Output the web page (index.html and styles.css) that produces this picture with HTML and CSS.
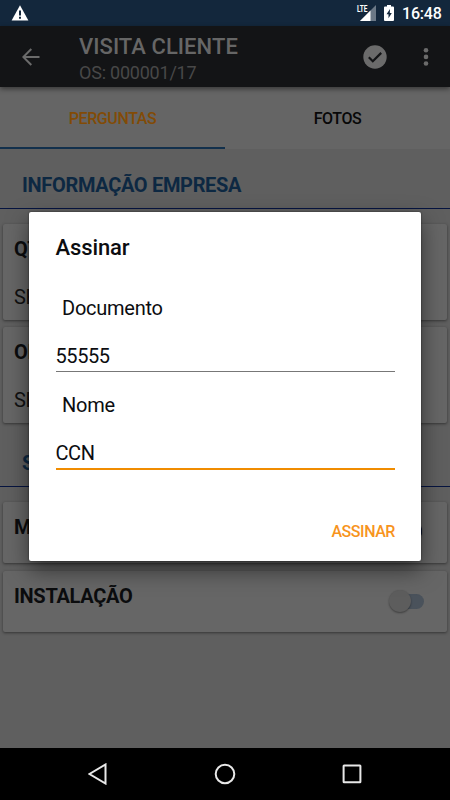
FILE: index.html
```html
<!DOCTYPE html>
<html lang="pt-BR">
<head>
<meta charset="utf-8">
<meta name="viewport" content="width=device-width, initial-scale=1">
<title>Visita Cliente</title>
<link rel="stylesheet" href="styles.css">
</head>
<body>
<div class="screen">
  <div class="status">
    <svg class="warn" width="18" height="16" viewBox="0 0 18 16"><path d="M9 .3 17.4 15.500H.6Z" fill="#fff"/><path d="M8 5.500h2v5H8zM8 11.700h2v2H8z" fill="#13273c"/></svg>
    <div class="status-right">
      <svg width="22" height="18" viewBox="0 0 22 18"><path d="M20 1v16H4Z" fill="#6b7886"/><path d="M14.500 6.500V17H4Z" fill="#fff"/><path d="M0 0h12v9H0z" fill="#13273c"/><text class="lte" x="1" y="8" textLength="10.500" lengthAdjust="spacingAndGlyphs">LTE</text></svg>
      <svg class="battery" width="10" height="16" viewBox="0 0 10 16"><path d="M3 0h4v1.600h2q1 0 1 1V15q0 1-1 1H1q-1 0-1-1V2.600q0-1 1-1h2z" fill="#fff"/><path d="M6 4 2.500 9.300h2v4L7.800 8h-2z" fill="#13273c"/></svg>
      <span class="clock">16:48</span>
    </div>
  </div>
  <header class="appbar">
    <svg class="back" width="18" height="18" viewBox="0 0 18 18" fill="none" stroke="#6b6b6b" stroke-width="2"><path d="M17.500 9H2M9.300 1 1.300 9l8 8"/></svg>
    <div class="titles">
      <h1 class="title">VISITA CLIENTE</h1>
      <div class="subtitle">OS: 000001/17</div>
    </div>
    <svg class="done" width="24" height="24" viewBox="0 0 24 24"><circle cx="12" cy="12" r="11.700" fill="#6b6b6b"/><path d="m5.800 12.300 4 4 8.400-8.400" fill="none" stroke="#131416" stroke-width="2.200"/></svg>
    <svg class="more" width="6" height="20" viewBox="0 0 6 20" fill="#6b6b6b"><circle cx="3" cy="3.300" r="2.300"/><circle cx="3" cy="9.900" r="2.300"/><circle cx="3" cy="16.500" r="2.300"/></svg>
  </header>
  <nav class="tabs">
    <div class="tab active">PERGUNTAS</div>
    <div class="tab">FOTOS</div>
  </nav>
  <main class="content">
    <h2 class="section">INFORMAÇÃO EMPRESA</h2>
    <div class="cards">
      <div class="card tall"><b>QT</b><span>SE</span></div>
      <div class="card tall"><b>OB</b><span>SE</span></div>
    </div>
    <h2 class="section second">S</h2>
    <div class="cards last">
      <div class="card"><b>M</b><i class="switch on"></i></div>
      <div class="card"><b>INSTALAÇÃO</b><i class="switch"></i></div>
    </div>
  </main>
  <footer class="navbar">
    <svg width="20" height="22" viewBox="0 0 20 22"><path d="M17.500 1.500v19L1.500 11Z"/></svg>
    <svg width="22" height="22" viewBox="0 0 22 22"><circle cx="11" cy="11" r="9.300"/></svg>
    <svg width="20" height="22" viewBox="0 0 20 22"><rect x="1.600" y="2.500" width="16.800" height="16.800" rx=".5"/></svg>
  </footer>
  <section class="dialog">
    <h3 class="dialog-title">Assinar</h3>
    <div class="label">Documento</div>
    <div class="field">55555</div>
    <div class="label">Nome</div>
    <div class="field focus">CCN</div>
    <div class="action">ASSINAR</div>
  </section>
</div>
</body>
</html>
```

FILE: styles.css
```css
* { box-sizing: border-box; }
body { margin: 0; font-family: Roboto, sans-serif; }
h1, h2, h3 { margin: 0; }
svg { display: block; flex: none; }
.screen { position: relative; width: 450px; height: 800px; overflow: hidden; display: flex; flex-direction: column; background: #5f5f5f; }
.status { height: 26px; background: #13273c; display: flex; align-items: center; justify-content: space-between; padding: 0 9px 0 11px; flex: none; }
.warn { margin-top: -1px; }
.status-right { display: flex; align-items: center; margin-left: -1px; }
.lte { font: 700 9px Roboto, sans-serif; fill: #fff; }
.battery { margin: 0 8px 0 6px; }
.clock { font-size: 16px; font-weight: 500; line-height: 26px; width: 39px; color: #fff; white-space: nowrap; padding-top: 2px; letter-spacing: -.2px; }
.appbar { height: 61px; background: #131416; display: flex; align-items: center; padding: 0 21px 0 22px; flex: none; position: relative; box-shadow: 0 2px 5px rgba(0,0,0,.45); }
.titles { margin-left: 39px; flex: 1; padding-top: 4px; }
.title { font-size: 22px; line-height: 28px; font-weight: 500; color: #666; letter-spacing: .05px; white-space: nowrap; }
.subtitle { font-size: 18px; line-height: 24px; color: #484848; letter-spacing: -.22px; }
.done { margin-right: 36px; }
.tabs { height: 62px; display: flex; background: #656565; flex: none; }
.tab { flex: 1; display: flex; align-items: center; justify-content: center; font-size: 16px; font-weight: 500; letter-spacing: -.4px; color: #080808; padding-top: 3px; border-bottom: 2px solid transparent; }
.tab.active { color: #824b06; border-color: #12304c; }
.content { flex: 1; }
.section { height: 60px; border-bottom: 1px solid #061440; padding: 23px 22px 0; font-size: 20px; line-height: 26px; font-weight: 700; letter-spacing: -.33px; color: #0d2842; }
.section.second { height: 64px; padding-top: 27px; }
.cards { padding: 15px 3px 0; display: flex; flex-direction: column; gap: 7px; }
.cards.last { gap: 8px; }
.card { position: relative; height: 61px; border-radius: 2px; background: #666; box-shadow: 0 1px 3px rgba(0,0,0,.45); padding: 12px 11px; font-size: 20px; line-height: 26px; color: #111; display: flex; flex-direction: column; gap: 22px; letter-spacing: -.3px; }
.card.tall { height: 96px; }
.card b { color: #0b0c0e; font-weight: 700; }
.switch { position: absolute; right: 23px; top: 23px; width: 32px; height: 15px; border-radius: 8px; background: #4a525b; }
.switch::before { content: ""; position: absolute; left: -3px; top: -4px; width: 22px; height: 22px; border-radius: 50%; background: #5d5d5d; box-shadow: 0 1px 2px rgba(0,0,0,.4); }
.switch.on { top: 22px; right: 25px; background: #0b1530; }
.switch.on::before { left: auto; right: 0; background: #0b1530; }
.navbar { height: 52px; background: #000; display: flex; justify-content: space-between; align-items: center; padding: 0 88px; flex: none; fill: none; stroke: #e8e8e8; stroke-width: 2; }
.dialog { position: absolute; left: 29px; top: 212px; width: 392px; height: 349px; background: #fff; border-radius: 2px; padding: 21px 26px 0 26.500px; box-shadow: 0 0 2px rgba(0,0,0,.6), 0 9px 22px rgba(0,0,0,.5); color: #0c0d10; }
.dialog-title { font-size: 22px; line-height: 30px; font-weight: 500; letter-spacing: -.1px; }
.label { margin: 32px 0 0 6.500px; font-size: 20px; line-height: 26px; letter-spacing: -.25px; }
.field { margin-top: 21px; height: 30px; font-size: 20px; line-height: 28px; border-bottom: 1px solid #777; letter-spacing: -.4px; }
.field + .label { margin-top: 20px; }
.field.focus { height: 31px; border-bottom: 2px solid #f08c00; }
.action { margin-top: 50px; text-align: right; font-size: 16px; line-height: 24px; font-weight: 500; letter-spacing: -.45px; color: #f7941d; }
```
